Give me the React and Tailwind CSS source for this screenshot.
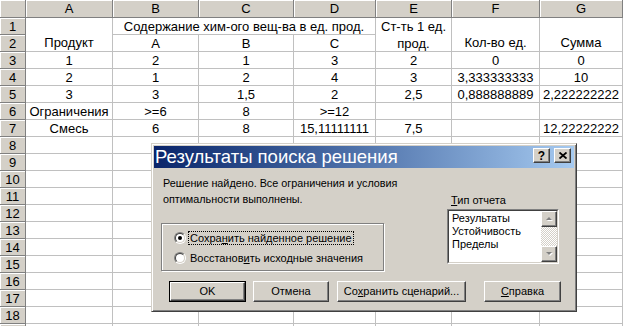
import React from "react";

const COLS = ["A", "B", "C", "D", "E", "F", "G"];

function ColHead({ children }) {
  return (
    <div className="bg-[#d4d0c8] border-r border-b border-r-[#808080] border-b-[#808080] shadow-[inset_1px_1px_0_#fff] flex items-center justify-center text-[13px] leading-[17px] text-black">
      {children}
    </div>
  );
}

function Cell({ children, className = "" }) {
  return (
    <div className={"border-r border-b border-[#c0c0c0] flex items-center justify-center text-[13px] leading-[17px] text-black whitespace-nowrap " + className}>
      {children}
    </div>
  );
}

function RaisedBtn({ children, className = "" }) {
  return (
    <div className={"bg-[#d4d0c8] border border-t-white border-l-white border-r-[#404040] border-b-[#404040] shadow-[inset_-1px_-1px_0_#808080] flex items-center justify-center " + className}>
      {children}
    </div>
  );
}

function Radio({ checked }) {
  return (
    <div className="w-[12px] h-[12px] rounded-full border border-t-[#808080] border-l-[#808080] border-r-white border-b-white">
      <div className="w-full h-full rounded-full border border-t-[#404040] border-l-[#404040] border-r-[#d4d0c8] border-b-[#d4d0c8] bg-white flex items-center justify-center">
        {checked && <div className="w-[4px] h-[4px] rounded-full bg-black" />}
      </div>
    </div>
  );
}

function Arrow({ up }) {
  return (
    <svg width="9" height="6" viewBox="0 0 9 6">
      {up ? (
        <>
          <polygon points="2,5 5,2 8,5" fill="#fff" />
          <polygon points="1,4 4,1 7,4" fill="#808080" />
        </>
      ) : (
        <>
          <polygon points="2,2 8,2 5,5" fill="#fff" />
          <polygon points="1,1 7,1 4,4" fill="#808080" />
        </>
      )}
    </svg>
  );
}

export default function App() {
  const rows = [
    ["3", "1", "2", "1", "3", "2", "0", "0"],
    ["4", "2", "1", "2", "4", "3", "3,333333333", "10"],
    ["5", "3", "3", "1,5", "2", "2,5", "0,888888889", "2,222222222"],
    ["6", "Ограничения", ">=6", "8", ">=12", "", "", ""],
    ["7", "Смесь", "6", "8", "15,11111111", "7,5", "", "12,22222222"],
  ];
  const empties = [];
  for (let r = 8; r <= 19; r++) empties.push(r);

  return (
    <div className="relative w-[623px] h-[326px] overflow-hidden bg-white font-['Liberation_Sans',Arial,sans-serif]">
      <div className="grid grid-cols-[26px_87px_86px_95px_82px_76px_88px_83px] grid-rows-[18px_repeat(19,17px)]">
        <ColHead />
        {COLS.map((c) => (
          <ColHead key={c}>{c}</ColHead>
        ))}

        <ColHead>1</ColHead>
        <Cell className="row-span-2 items-end">Продукт</Cell>
        <Cell className="col-span-3">Содержание хим-ого вещ-ва в ед. прод.</Cell>
        <Cell className="row-span-2 flex-col">
          <span className="h-[17px]">Ст-ть 1 ед.</span>
          <span className="h-[16px]">прод.</span>
        </Cell>
        <Cell className="row-span-2 items-end">Кол-во ед.</Cell>
        <Cell className="row-span-2 items-end">Сумма</Cell>

        <ColHead>2</ColHead>
        <Cell>A</Cell>
        <Cell>B</Cell>
        <Cell>C</Cell>

        {rows.map((r) => (
          <React.Fragment key={r[0]}>
            <ColHead>{r[0]}</ColHead>
            {r.slice(1).map((v, i) => (
              <Cell key={i}>{v}</Cell>
            ))}
          </React.Fragment>
        ))}

        {empties.map((n) => (
          <React.Fragment key={n}>
            <ColHead>{n < 19 ? n : null}</ColHead>
            {COLS.map((c) => (
              <Cell key={c} />
            ))}
          </React.Fragment>
        ))}
      </div>

      {/* Dialog window */}
      <div className="absolute left-[151px] top-[143px] w-[426px] h-[169px] bg-[#d4d0c8] border border-t-[#d4d0c8] border-l-[#d4d0c8] border-r-[#404040] border-b-[#404040] shadow-[inset_1px_1px_0_#fff,inset_-1px_-1px_0_#808080] p-[2px] text-black">
        <div className="h-[22px] flex items-start bg-linear-to-r from-[#0a246a] to-[#a6caf0]">
          <span className="pl-[1px] text-white text-[18.5px] leading-[22px] whitespace-nowrap">Результаты поиска решения</span>
          <div className="ml-auto flex gap-[4px] mr-[3px] mt-[2px]">
            <RaisedBtn className="w-[17px] h-[15px]">
              <span className="text-[12px] leading-[12px] font-bold">?</span>
            </RaisedBtn>
            <RaisedBtn className="w-[17px] h-[15px]">
              <svg width="8" height="7" viewBox="0 0 8 7">
                <path d="M0.5 0.5 L7.5 6.5 M7.5 0.5 L0.5 6.5" stroke="#000" strokeWidth="1.8" />
              </svg>
            </RaisedBtn>
          </div>
        </div>

        <div className="flex pl-[7px] pt-[7px] text-[11px]">
          <div className="w-[223px] shrink-0">
            <p className="pl-[2px] leading-[16px] whitespace-nowrap text-[10.8px]">
              Решение найдено. Все ограничения и условия
              <br />
              оптимальности выполнены.
            </p>
            <div className="mt-[16px] h-[48px] border border-[#808080] shadow-[inset_1px_1px_0_#fff,1px_1px_0_#fff] pl-[12px] pt-[7px] flex flex-col gap-[6px]">
              <div className="h-[14px] flex items-center">
                <Radio checked />
                <span className="ml-[2px] px-[1px] leading-[12px] border border-dotted border-black whitespace-nowrap">
                  Сохра<u>н</u>ить найденное решение
                </span>
              </div>
              <div className="h-[14px] flex items-center">
                <Radio />
                <span className="ml-[4px] leading-[12px] whitespace-nowrap">
                  Восстанов<u>и</u>ть исходные значения
                </span>
              </div>
            </div>
          </div>

          <div className="ml-[63px] mt-[17px] shrink-0">
            <div className="pl-[4px] leading-[16px] whitespace-nowrap">
              <u>Т</u>ип отчета
            </div>
            <div className="mt-[1px] w-[112px] h-[55px] border border-t-[#808080] border-l-[#808080] border-r-white border-b-white">
              <div className="w-full h-full border border-t-[#404040] border-l-[#404040] border-r-[#d4d0c8] border-b-[#d4d0c8] bg-white flex">
                <div className="flex-1 pl-[3px] pt-[1px] leading-[13px] whitespace-nowrap">
                  <div>Результаты</div>
                  <div>Устойчивость</div>
                  <div>Пределы</div>
                </div>
                <div className="w-[16px] flex flex-col">
                  <RaisedBtn className="h-[16px] shrink-0">
                    <Arrow up />
                  </RaisedBtn>
                  <div className="flex-1 bg-[repeating-conic-gradient(#d4d0c8_0_25%,#fff_0_50%)] bg-[length:2px_2px]" />
                  <RaisedBtn className="h-[16px] shrink-0">
                    <Arrow />
                  </RaisedBtn>
                </div>
              </div>
            </div>
          </div>
        </div>

        <div className="flex mt-[10px] pl-[15px] text-[11px]">
          <div className="w-[77px] h-[21px] border border-black">
            <RaisedBtn className="w-full h-full">OK</RaisedBtn>
          </div>
          <RaisedBtn className="ml-[7px] w-[76px] h-[21px]">Отмена</RaisedBtn>
          <RaisedBtn className="ml-[8px] w-[129px] h-[21px] whitespace-nowrap">
            Со<u>х</u>ранить сценарий...
          </RaisedBtn>
          <RaisedBtn className="ml-[18px] w-[77px] h-[21px]">
            <u>С</u>правка
          </RaisedBtn>
        </div>
      </div>
    </div>
  );
}
